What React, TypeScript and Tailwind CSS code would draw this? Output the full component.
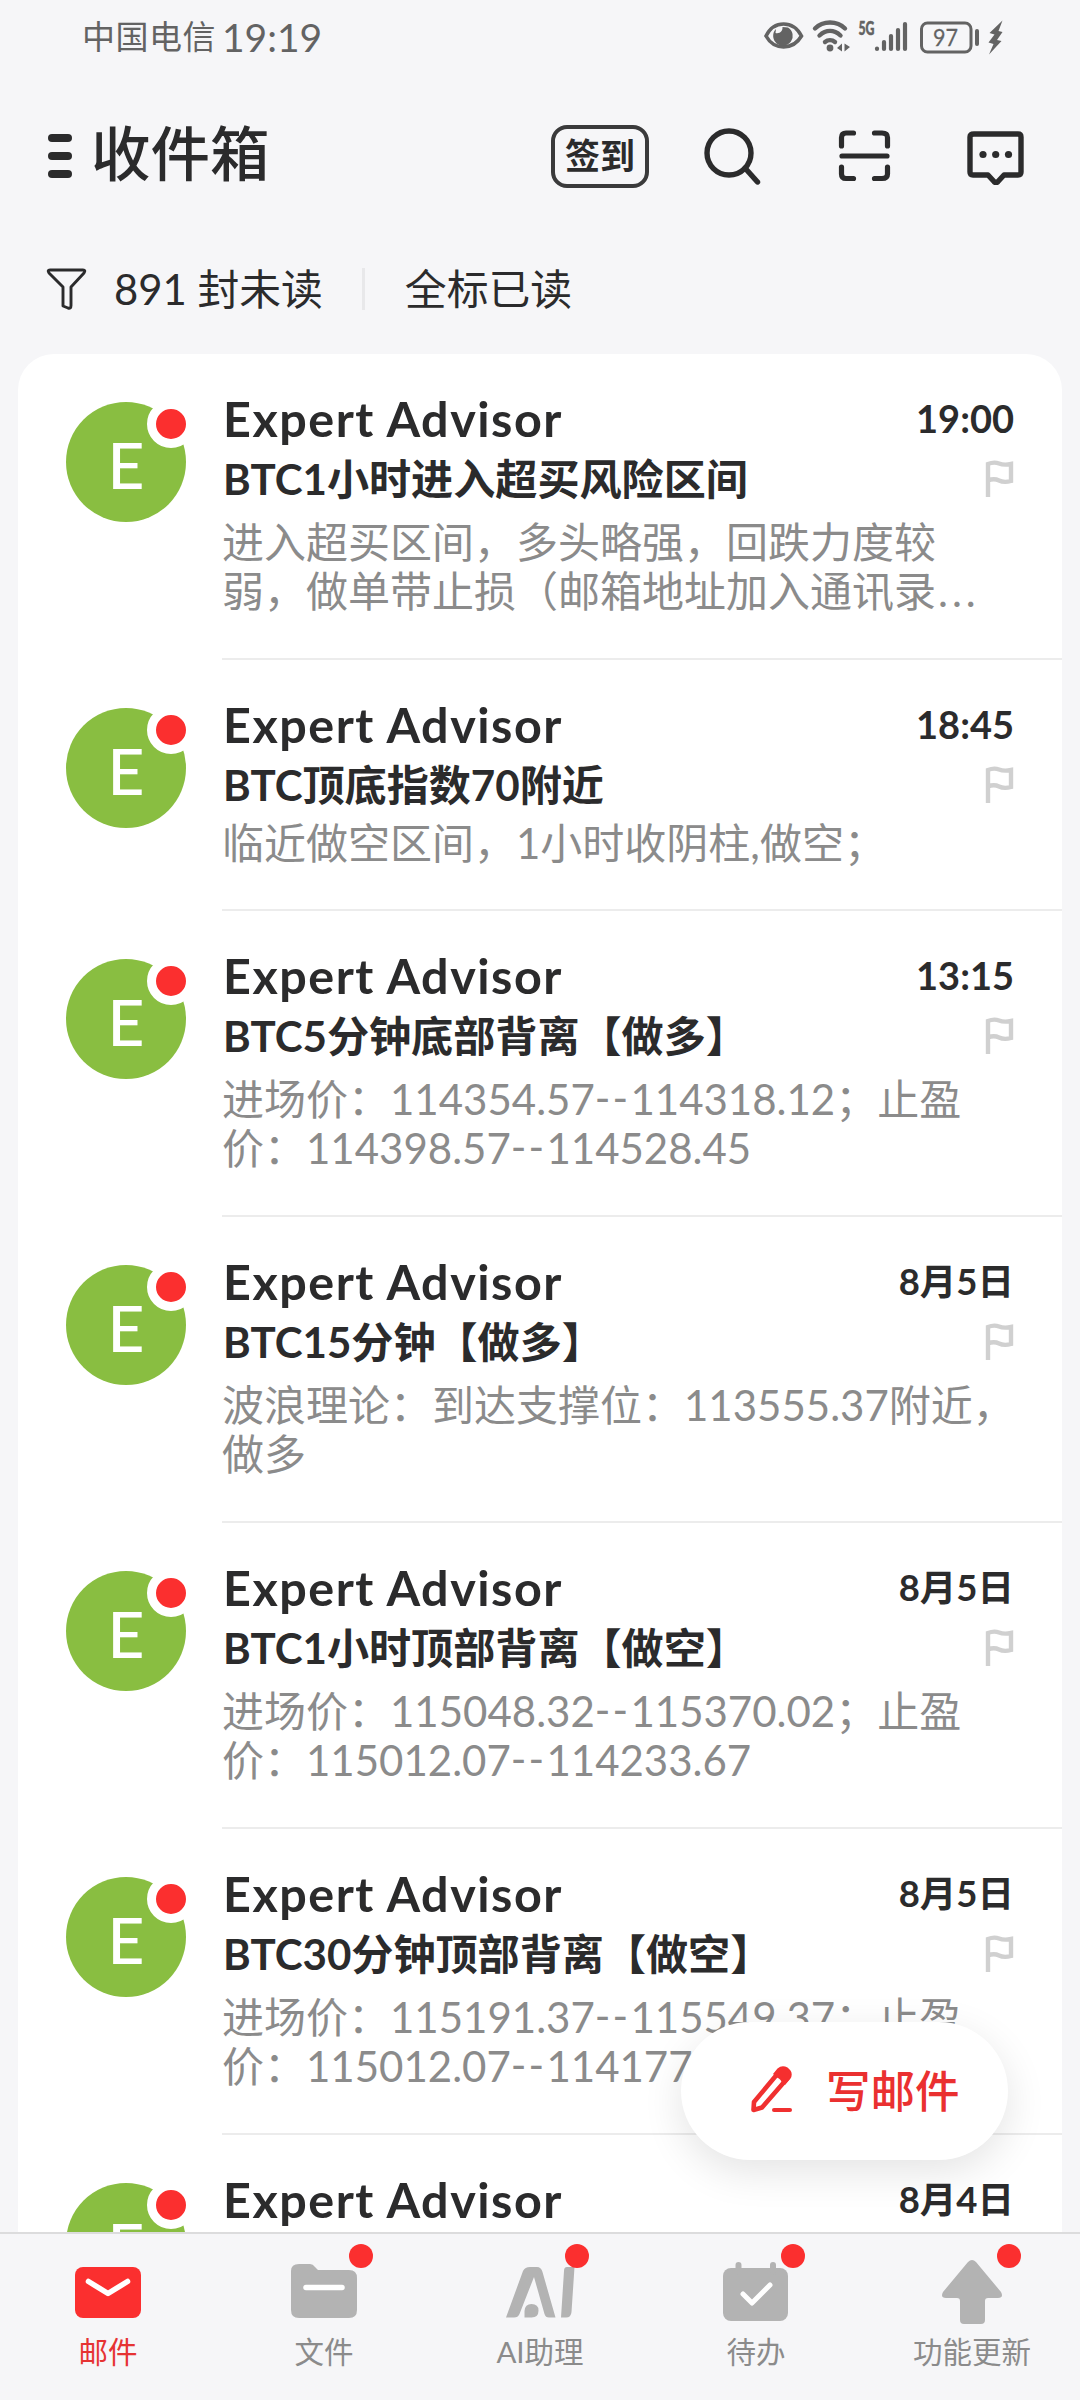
import React from "react";

type Mail = { time: string; subject?: string; lines?: string[] };

const mails: Mail[] = [
  { time: "19:00", subject: "BTC1小时进入超买风险区间", lines: ["进入超买区间，多头略强，回跌力度较", "弱，做单带止损（邮箱地址加入通讯录..."] },
  { time: "18:45", subject: "BTC顶底指数70附近", lines: ["临近做空区间，1小时收阴柱,做空；"] },
  { time: "13:15", subject: "BTC5分钟底部背离【做多】", lines: ["进场价：114354.57--114318.12；止盈", "价：114398.57--114528.45"] },
  { time: "8月5日", subject: "BTC15分钟【做多】", lines: ["波浪理论：到达支撑位：113555.37附近，", "做多"] },
  { time: "8月5日", subject: "BTC1小时顶部背离【做空】", lines: ["进场价：115048.32--115370.02；止盈", "价：115012.07--114233.67"] },
  { time: "8月5日", subject: "BTC30分钟顶部背离【做空】", lines: ["进场价：115191.37--115549.37；止盈", "价：115012.07--114177.67"] },
  { time: "8月4日" },
];

function StatusBar() {
  return (
    <div className="flex h-[72px] shrink-0 items-center justify-between pt-[2px] pr-[76px] pl-[82px] text-[#636363]">
      <div className="flex items-center whitespace-nowrap">
        <span className="text-[33px] tracking-[0.5px]">中国电信</span>
        <span className="ml-[6px] text-[39px]">19:19</span>
      </div>
      <svg width="242" height="38" viewBox="0 0 242 38" fill="none" stroke="#636363">
        <path d="M4 18C12 2 31 2 39.500 18C31 32.500 12 32.500 4 18Z" strokeWidth="3.600" />
        <path d="M14 11A9.800 9.800 0 1 0 26 9.500L20.500 9A5.500 5.500 0 0 1 13.500 15Z" fill="#636363" stroke="none" />
        <g strokeWidth="4.400" strokeLinecap="round">
          <path d="M53 10.500C61 2.500 75 2.500 83 10.500" />
          <path d="M57.500 17.500C64 11.500 72 11.500 78.500 17.500" />
          <path d="M63 24C66 21.500 70 21.500 73 24" />
        </g>
        <circle cx="68" cy="30" r="3.400" fill="#636363" stroke="none" />
        <path d="M75 30L80 25.500V33.500ZM82.500 25.500L88 29L82.500 33.500Z" fill="#636363" stroke="none" />
        <text x="96.500" y="16.500" fontSize="18" fontWeight="900" fill="#636363" stroke="#636363" strokeWidth="0.500" textLength="16" lengthAdjust="spacingAndGlyphs">5G</text>
        <g strokeWidth="4.200" strokeLinecap="round">
          <path d="M115 30.500V31M122 24V31M129 18V31M136 12V31M143 6V31" />
        </g>
        <rect x="159.500" y="5" width="49.500" height="29" rx="6" strokeWidth="3" />
        <text x="171" y="28" fontSize="24" fill="#636363" stroke="#636363" strokeWidth="0.300" textLength="25" lengthAdjust="spacingAndGlyphs">97</text>
        <path d="M215 13V26" strokeWidth="4" strokeLinecap="round" />
        <path d="M240.500 2.500L236.500 13L240.500 14L235 22L239.500 23L227 36.500L231.500 26L226.500 24.500L232.500 16.500L227.500 15Z" fill="#636363" stroke="none" />
      </svg>
    </div>
  );
}

function Header() {
  return (
    <header className="flex h-[168px] shrink-0 items-center pl-[48px] text-[#2b2b2c]">
      <div className="flex flex-col gap-[10px]">
        <i className="h-2 w-6 rounded-full bg-[#2b2b2c]" />
        <i className="h-2 w-6 rounded-full bg-[#2b2b2c]" />
        <i className="h-2 w-6 rounded-full bg-[#2b2b2c]" />
      </div>
      <h1 className="ml-[19px] pb-[4px] text-[59.500px] leading-none font-medium">收件箱</h1>
      <div className="ml-auto flex items-center pr-[54px]">
        <div className="flex h-[63px] w-[98px] items-center justify-center rounded-[16px] border-4 border-[#3a3a3b] pb-[2px] text-[35px] leading-none font-bold">
          签到
        </div>
        <svg className="ml-[55px]" width="58" height="62" viewBox="0 0 58 62" fill="none" stroke="#2b2b2c" strokeWidth="5.400" strokeLinecap="round">
          <circle cx="25" cy="28" r="22" />
          <path d="M41 43L53.500 57" />
        </svg>
        <svg className="ml-[76px]" width="54" height="54" viewBox="0 0 54 54" fill="none" stroke="#2b2b2c" strokeWidth="5.200" strokeLinecap="round" strokeLinejoin="round">
          <path d="M3.500 17V8.500Q3.500 4 8 4H15.500M36.500 4H44Q49.500 4 49.500 8.500V17M3.500 38V45Q3.500 49.500 8 49.500H15.500M36.500 49.500H44Q49.500 49.500 49.500 45V38M4 27H49" />
        </svg>
        <svg className="ml-[74px]" width="60" height="58" viewBox="0 0 60 58" fill="none" stroke="#2b2b2c" strokeWidth="5.400" strokeLinejoin="round">
          <path d="M8 7H52Q55 7 55 10V45Q55 48 52 48H38L32 54.500Q30 56.500 28 54.500L22 48H7Q4 48 4 45V10Q4 7 8 7Z" />
          <g fill="#2b2b2c" stroke="none">
            <circle cx="17" cy="27.500" r="3.600" />
            <circle cx="29.700" cy="27.500" r="3.600" />
            <circle cx="42.500" cy="27.500" r="3.600" />
          </g>
        </svg>
      </div>
    </header>
  );
}

function FilterBar() {
  return (
    <div className="flex h-[114px] shrink-0 items-center pb-[16px] pl-[46px] text-[41.800px] whitespace-nowrap text-[#2b2b2c]">
      <svg width="42" height="44" viewBox="0 0 42 44" fill="none" stroke="#2b2b2c" strokeWidth="2.900" strokeLinejoin="round">
        <path d="M4 3H37Q40 3 38 6L25 20V38.500Q25 42 22 41L17 39V20L3 6Q1 3 4 3Z" />
      </svg>
      <span className="ml-[26px]">891 封未读</span>
      <i className="ml-[39px] h-[42px] w-[3px] bg-[#e8e8ea]" />
      <span className="ml-[40px]">全标已读</span>
    </div>
  );
}

function Avatar() {
  return (
    <div className="relative ml-12 flex size-[120px] shrink-0 items-center justify-center rounded-full bg-[#89be41] pt-[5px] text-[64px] leading-none font-medium text-white">
      E
      <i className="absolute -top-[2px] -right-[9px] size-12 rounded-full border-[9px] border-white bg-[#fb2f2f]" />
    </div>
  );
}

function Flag() {
  return (
    <svg width="30" height="38" viewBox="0 0 30 38" fill="none" stroke="#d0d0d0" strokeWidth="4.400">
      <path d="M4 37V4Q10 1.500 15 3.500T27 4V21Q20 23 15 20.500T4 20.500" />
    </svg>
  );
}

// Double dashes and trailing dots are set wider than the surrounding text.
function Preview({ text }: { text: string }) {
  return (
    <p>
      {text.split(/(--|\.\.\.)/).map((part, index) => {
        if (part === "--") {
          return <span key={index} className="align-[2px] leading-none tracking-[2.200px]">--</span>;
        }
        if (part === "...") {
          return <span key={index} className="ml-[2px] leading-none tracking-[4px]">...</span>;
        }
        return part;
      })}
    </p>
  );
}

function MailRow({ mail }: { mail: Mail }) {
  const single = mail.lines?.length === 1;
  const isDate = mail.time.includes("月");
  return (
    <article className={`flex shrink-0 pt-12 ${single ? "h-[251px]" : "h-[306px]"}`}>
      <Avatar />
      <div className="ml-9 flex flex-1 flex-col border-b-2 border-[#ececec]">
        <div className="flex h-[35px] items-center justify-between pr-[48px] whitespace-nowrap text-[#2b2b2c]">
          <span className="pb-[2px] pl-px text-[48.500px] leading-none font-bold tracking-[1.500px]">Expert Advisor</span>
          <span className={`pb-[3px] leading-none font-bold ${isDate ? "text-[36.500px]" : "text-[38px]"}`}>{mail.time}</span>
        </div>
        {mail.subject && (
          <div className="mt-[19px] flex h-[46px] items-center justify-between pr-[48px] whitespace-nowrap text-[#2b2b2c]">
            <span className="pl-px text-[42.100px] leading-none font-bold">{mail.subject}</span>
            <Flag />
          </div>
        )}
        {mail.lines && (
          <div className={`text-[42px] leading-[49px] whitespace-nowrap text-[#8b8b8b] ${single ? "mt-[11px]" : "mt-[16px]"}`}>
            {mail.lines.map((line) => (
              <Preview key={line} text={line} />
            ))}
          </div>
        )}
      </div>
    </article>
  );
}

function ComposeButton() {
  return (
    <button className="absolute top-[2022px] left-[681px] flex h-[138px] w-[327px] items-center rounded-full bg-white pl-[68px] text-[#ea3030] shadow-[0_12px_40px_rgba(0,0,0,0.11)]">
      <svg width="46" height="52" viewBox="0 0 46 52" fill="none" stroke="#f03030" strokeWidth="4.600" strokeLinejoin="round">
        <path d="M30 7L5 37L4.500 45L13 42.500L39.500 12" />
        <path d="M28.500 3.500Q33 -0.500 38.500 2.500Q45 7.500 41.500 13.500L36 20L33 18Q32 14 28 12.500L24 9Z" fill="#f52f2f" stroke="none" />
        <path d="M25 45H41" strokeWidth="4" strokeLinecap="round" />
      </svg>
      <span className="ml-[31px] pt-px text-[44.500px] leading-none font-medium">写邮件</span>
    </button>
  );
}

const icons: Record<string, React.ReactNode> = {
  邮件: (
    <>
      <rect x="7" y="8" width="66" height="51" rx="8" fill="#fb2f2f" />
      <path d="M20.500 22.500L40 34.500L59.500 22.500" stroke="#fff" strokeWidth="5.500" strokeLinecap="round" strokeLinejoin="round" />
    </>
  ),
  文件: (
    <>
      <path d="M15 5H26Q29 5 31 8L34 11H65Q73 11 73 19V51Q73 59 65 59H15Q7 59 7 51V12Q7 5 15 5Z" fill="#b3b3b3" />
      <path d="M22 28.500H58" stroke="#fff" strokeWidth="5.500" strokeLinecap="round" />
    </>
  ),
  AI助理: (
    <>
      <path d="M6 58.500L23 12Q25 8 30 8H37Q41 8 42.500 13L55.500 58.500H49Q45.500 58.500 44.500 55L34 18L19.500 55Q18 58.500 14 58.500Z" fill="#b3b3b3" />
      <path d="M24.500 58.500V52Q25 45 31.500 45Q38.500 45 38.500 51.500Q38.500 58.500 31.500 58.500Z" fill="#b3b3b3" />
      <path d="M67 8H74.500L71.500 53Q71 58.500 66 58.500H61L64 12Q64 8 67 8Z" fill="#b3b3b3" />
    </>
  ),
  待办: (
    <>
      <rect x="7" y="9" width="65" height="53" rx="8" fill="#b3b3b3" />
      <path d="M22.500 6V13M57 6V13" stroke="#b3b3b3" strokeWidth="6" strokeLinecap="round" />
      <path d="M27 35L36 44L54 26" stroke="#fff" strokeWidth="5" strokeLinecap="round" strokeLinejoin="round" />
    </>
  ),
  功能更新: (
    <path d="M36 3Q40 -1 44 3L69 33Q72 39 66 39H56Q53 39 53 42V61Q53 65 49 65H32Q28 65 28 61V42Q28 39 25 39H14Q8 39 11 33Z" fill="#b3b3b3" />
  ),
};

function TabBar() {
  return (
    <nav className="flex h-[168px] shrink-0 border-t-2 border-[#dcdcdd] bg-[#f6f6f8]">
      {Object.keys(icons).map((name, index) => (
        <div key={name} className="flex flex-1 flex-col items-center pt-[25px]">
          <div className="relative">
            <svg width="80" height="68" viewBox="0 0 80 68" fill="none">{icons[name]}</svg>
            {index > 0 && <i className="absolute -top-[15px] left-[65px] size-6 rounded-full bg-[#fb2f2f]" />}
          </div>
          <span className={`mt-[10px] text-[29.500px] leading-none whitespace-nowrap ${index === 0 ? "text-[#e63333]" : "text-[#8b8b8b]"}`}>{name}</span>
        </div>
      ))}
    </nav>
  );
}

export default function App() {
  return (
    <div className="relative flex h-[2400px] w-[1080px] flex-col overflow-hidden bg-[#f6f6f8] font-['Lato','Noto_Sans_CJK_SC',sans-serif]">
      <StatusBar />
      <Header />
      <FilterBar />
      <main className="mx-[18px] flex min-h-0 flex-1 flex-col overflow-hidden rounded-t-[36px] bg-white">
        {mails.map((mail, index) => (
          <MailRow key={index} mail={mail} />
        ))}
      </main>
      <TabBar />
      <ComposeButton />
    </div>
  );
}
